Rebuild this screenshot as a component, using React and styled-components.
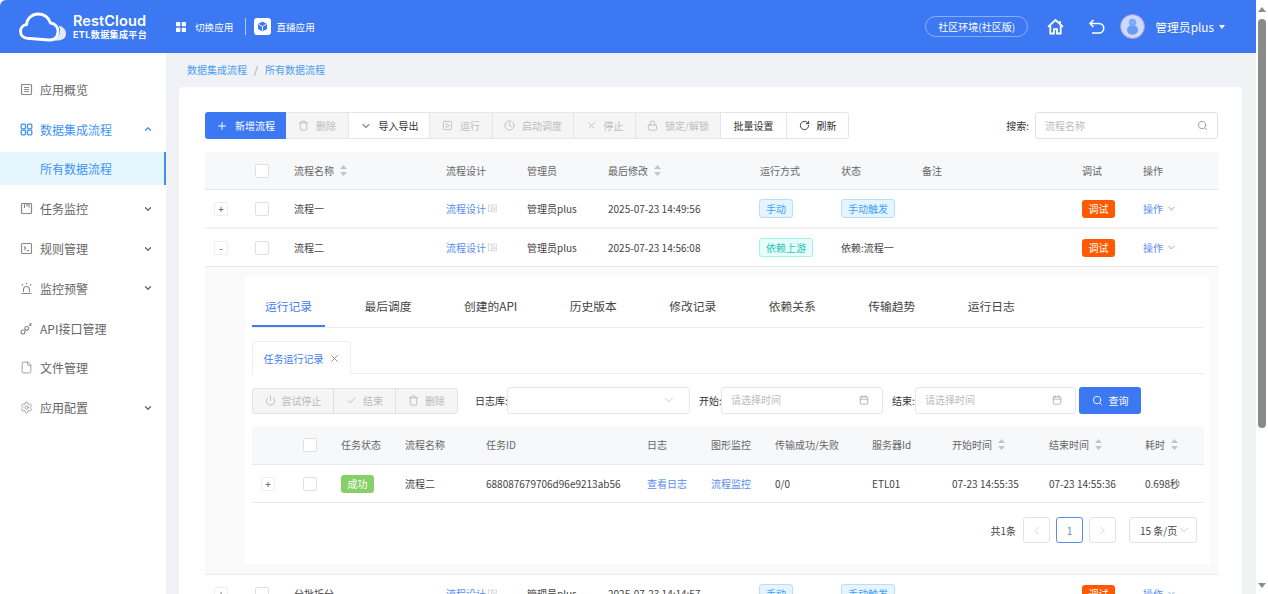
import styled, { createGlobalStyle } from "styled-components";
import {
    Plus,
    Trash,
    ChevronDown,
    ChevronUp,
    ChevronLeft,
    ChevronRight,
    SquarePlay,
    Clock,
    X,
    Lock,
    RotateCw,
    Search,
    Power,
    Check,
    Calendar,
    File,
    Settings,
} from "lucide-react";

const FLOW_COLUMNS = "50px 39px 152px 81px 81px 152px 81px 81px 160px 61px 75px";
const TASK_COLUMNS = "51px 38px 64px 81px 161px 64px 64px 97px 80px 97px 96px 59px";

const MENU = [
    { label: "应用概览", icon: <OverviewIcon /> },
    { label: "数据集成流程", icon: <GroupIcon />, open: true },
    { label: "任务监控", icon: <MonitorIcon />, arrow: true },
    { label: "规则管理", icon: <RuleIcon />, arrow: true },
    { label: "监控预警", icon: <AlarmIcon />, arrow: true },
    { label: "API接口管理", icon: <LinkIcon /> },
    { label: "文件管理", icon: <File size={13} strokeWidth={1.4} /> },
    { label: "应用配置", icon: <Settings size={13} strokeWidth={1.4} />, arrow: true },
];

const TOOLS = [
    { label: "删除", width: 63, icon: <Trash size={11} />, off: true },
    { label: "导入导出", width: 81, icon: <ChevronDown size={12} /> },
    { label: "运行", width: 63, icon: <SquarePlay size={11} />, off: true },
    { label: "启动调度", width: 81, icon: <Clock size={11} />, off: true },
    { label: "停止", width: 62, icon: <X size={11} />, off: true },
    { label: "锁定/解锁", width: 85, icon: <Lock size={11} />, off: true },
    { label: "批量设置", width: 66 },
    { label: "刷新", width: 62, icon: <RotateCw size={11} /> },
];

const TABS = ["运行记录", "最后调度", "创建的API", "历史版本", "修改记录", "依赖关系", "传输趋势", "运行日志"];

function OverviewIcon() {
    return (
        <svg width="13" height="13" viewBox="0 0 13 13" fill="none" stroke="currentColor" strokeWidth="1.2">
            <rect x="1.500" y="1.500" width="10" height="10" rx="1" />
            <path d="M4 4.500h5M4 6.500h5M4 8.500h5" />
        </svg>
    );
}

function GroupIcon() {
    return (
        <svg width="13" height="13" viewBox="0 0 13 13" fill="none" stroke="currentColor" strokeWidth="1.3">
            <rect x="1.200" y="1.200" width="4.300" height="4.600" rx="1" />
            <rect x="7.500" y="1.200" width="4.300" height="4.600" rx="1" />
            <rect x="1.200" y="7.200" width="4.300" height="4.600" rx="1" />
            <rect x="7.500" y="7.200" width="4.300" height="4.600" rx="1" />
        </svg>
    );
}

function MonitorIcon() {
    return (
        <svg width="13" height="13" viewBox="0 0 13 13" fill="none" stroke="currentColor" strokeWidth="1.2">
            <rect x="1.500" y="1.500" width="10" height="10" rx="1" />
            <path d="M4.500 2v4M7 2v2.500M9 2v3.500" />
        </svg>
    );
}

function RuleIcon() {
    return (
        <svg width="13" height="13" viewBox="0 0 13 13" fill="none" stroke="currentColor" strokeWidth="1.1">
            <rect x="1.500" y="1.500" width="10" height="10" rx="1" />
            <path d="M3.800 4.500l2 1.700-2 1.700M6.500 8.500h2.500" />
        </svg>
    );
}

function AlarmIcon() {
    return (
        <svg width="13" height="13" viewBox="0 0 13 13" fill="none" stroke="currentColor" strokeWidth="1.1">
            <path d="M3.500 10V7.500a3 3 0 0 1 6 0V10" />
            <path d="M1.500 11.500h10M6.500 .8v1.500M1.800 2.300l1.200 1.200M11.200 2.300L10 3.500" />
        </svg>
    );
}

function LinkIcon() {
    return (
        <svg width="13" height="13" viewBox="0 0 13 13" fill="none" stroke="currentColor" strokeWidth="1.1">
            <circle cx="3" cy="10" r="2" />
            <rect x="5" y="4.600" width="3.400" height="3.400" rx="1" transform="rotate(45 6.700 6.300)" />
            <path d="M9 4l2.500-2.500M9.500 1.500l2 2" />
        </svg>
    );
}

function Logo() {
    return (
        <svg width="48" height="30" viewBox="0 0 48 30" fill="none">
            <path
                d="M39.500 13.500C44 14.500 47 17.500 47 21.500 47 26.500 43 28.500 38 28.500L29 29C35 28.500 40 25.500 41 20 41.300 17.500 40.700 15.500 39.500 13.500z"
                fill="#fff"
                fillOpacity=".85"
            />
            <path
                d="M10 26.500C4.500 26.500 1.500 23.500 1.500 19.500 1.500 16 4 13 7.500 12.500 8 6.500 13 2 19 2c6 0 10.500 3.500 12.500 9 4.500.5 8 4 7.500 9-.5 5-4 8-8 8-7 0-14-1.500-21-1.500z"
                stroke="#fff"
                strokeWidth="2.800"
            />
        </svg>
    );
}

function AppsIcon() {
    return (
        <svg width="10" height="10" viewBox="0 0 10 10" fill="#fff">
            <rect width="4.300" height="4.300" rx=".8" />
            <rect x="5.700" width="4.300" height="4.300" rx=".8" />
            <rect y="5.700" width="4.300" height="4.300" rx=".8" />
            <rect x="5.700" y="5.700" width="4.300" height="4.300" rx=".8" />
        </svg>
    );
}

function BoxIcon() {
    return (
        <svg width="17" height="17" viewBox="0 0 17 17">
            <rect width="17" height="17" rx="3" fill="#fff" />
            <path d="M8.500 3.500l4.500 2.500v5l-4.500 2.500L4 11V6z" fill="#3b78f2" />
            <path d="M4.500 6.200l4 2.300 4-2.300M8.500 8.500v4.800" stroke="#fff" strokeWidth=".9" fill="none" />
        </svg>
    );
}

function HomeIcon() {
    return (
        <svg width="17" height="17" viewBox="0 0 17 17" fill="none" stroke="#fff" strokeWidth="1.800">
            <path d="M1 8.800L8.500 2 16 8.800" />
            <path d="M13 3v3" />
            <path d="M3.300 7.500v8h3.700v-4.300h3v4.300h3.700v-8" />
        </svg>
    );
}

function BackIcon() {
    return (
        <svg width="17" height="16" viewBox="0 0 17 16" fill="none" stroke="#fff" strokeWidth="1.600">
            <path d="M2 4.500h9a4.700 4.700 0 0 1 0 9.500H4" />
            <path d="M5.500 1L2 4.500 5.500 8" />
        </svg>
    );
}

function AvatarIcon() {
    return (
        <svg width="25" height="25" viewBox="0 0 25 25">
            <circle cx="12.500" cy="12.500" r="12" fill="#c9dcfb" stroke="#b58de0" strokeWidth="1" />
            <circle cx="12.500" cy="8.500" r="3.800" fill="#82a9f2" />
            <ellipse cx="12.500" cy="16" rx="5.500" ry="4.800" fill="#6a9bf4" />
        </svg>
    );
}

function SortIcon() {
    return (
        <svg width="7" height="11" viewBox="0 0 7 11" fill="#c4c4c4">
            <path d="M3.500 0L7 4H0z" />
            <path d="M3.500 11L0 7h7z" />
        </svg>
    );
}

function MiniDesign() {
    return (
        <svg width="9" height="9" viewBox="0 0 9 9" fill="none" stroke="#d8d8d8" strokeWidth=".9">
            <rect x=".5" y="1" width="3" height="6.500" />
            <rect x="5" y="1" width="3.500" height="3" />
            <rect x="5" y="5.300" width="3.500" height="2.500" />
        </svg>
    );
}

function FlowRow({ expander, name, time, way, wayColor, status, link }) {
    return (
        <FlowLine>
            <Cell>
                <Expander $left={9}>{expander}</Expander>
            </Cell>
            <Cell>
                <CheckBox />
            </Cell>
            <Cell>{name}</Cell>
            <LinkCell>
                流程设计
                <MiniDesign />
            </LinkCell>
            <Cell>管理员plus</Cell>
            <Cell>{time}</Cell>
            <Cell>
                <WayTag $color={wayColor}>{way}</WayTag>
            </Cell>
            <Cell>{link ? status : <Tag>{status}</Tag>}</Cell>
            <Cell />
            <Cell>
                <DebugButton>调试</DebugButton>
            </Cell>
            <OpCell>
                操作
                <ChevronDown size={11} strokeWidth={1.6} />
            </OpCell>
        </FlowLine>
    );
}

export default function App() {
    return (
        <Page>
            <GlobalStyle />
            <Main>
                <Header>
                    <Brand>
                        <Logo />
                        <BrandText>
                            <BrandName>RestCloud</BrandName>
                            <BrandSub>ETL数据集成平台</BrandSub>
                        </BrandText>
                    </Brand>
                    <HeaderLink>
                        <AppsIcon />
                        切换应用
                    </HeaderLink>
                    <HeaderDivider />
                    <HeaderLink $tight>
                        <BoxIcon />
                        直播应用
                    </HeaderLink>
                    <HeaderRight>
                        <EnvPill>社区环境(社区版)</EnvPill>
                        <HeaderIcon $width={41}>
                            <HomeIcon />
                        </HeaderIcon>
                        <HeaderIcon $width={32}>
                            <BackIcon />
                        </HeaderIcon>
                        <AvatarIcon />
                        <UserName>管理员plus</UserName>
                        <Caret />
                    </HeaderRight>
                </Header>
                <Body>
                    <Sidebar>
                        {MENU.map((item) => (
                            <div key={item.label}>
                                <MenuItem $open={item.open}>
                                    <MenuIcon $open={item.open}>{item.icon}</MenuIcon>
                                    {item.label}
                                    {item.open && <MenuArrow as={ChevronUp} size={10} strokeWidth={3} />}
                                    {item.arrow && <MenuArrow as={ChevronDown} size={10} strokeWidth={3} />}
                                </MenuItem>
                                {item.open && <SubItem>所有数据流程</SubItem>}
                            </div>
                        ))}
                    </Sidebar>
                    <Content>
                        <Crumbs>
                            数据集成流程<CrumbSlash>/</CrumbSlash>所有数据流程
                        </Crumbs>
                        <Card>
                            <TopBar>
                                <ButtonGroup>
                                    <PrimaryTool>
                                        <Plus size={12} />
                                        新增流程
                                    </PrimaryTool>
                                    {TOOLS.map((tool) => (
                                        <ToolButton key={tool.label} $width={tool.width} $off={tool.off}>
                                            {tool.icon}
                                            {tool.label}
                                        </ToolButton>
                                    ))}
                                </ButtonGroup>
                                <SearchLabel>搜索:</SearchLabel>
                                <SearchBox>
                                    流程名称
                                    <Search size={11} color="#999" />
                                </SearchBox>
                            </TopBar>

                            <FlowHead>
                                <Cell />
                                <Cell>
                                    <CheckBox />
                                </Cell>
                                <HeadCell>
                                    流程名称
                                    <SortIcon />
                                </HeadCell>
                                <Cell>流程设计</Cell>
                                <Cell>管理员</Cell>
                                <HeadCell>
                                    最后修改
                                    <SortIcon />
                                </HeadCell>
                                <Cell>运行方式</Cell>
                                <Cell>状态</Cell>
                                <Cell>备注</Cell>
                                <Cell>调试</Cell>
                                <Cell>操作</Cell>
                            </FlowHead>
                            <FlowRow expander="+" name="流程一" time="2025-07-23 14:49:56" way="手动" status="手动触发" />
                            <FlowRow
                                expander="-"
                                name="流程二"
                                time="2025-07-23 14:56:08"
                                way="依赖上游"
                                wayColor="teal"
                                status="依赖:流程一"
                                link
                            />

                            <Expanded>
                                <DetailPanel>
                                    <TabBar>
                                        {TABS.map((tab, i) => (
                                            <TabItem key={tab} $active={i === 0}>
                                                {tab}
                                            </TabItem>
                                        ))}
                                    </TabBar>
                                    <CardTabs>
                                        <CardTab>
                                            任务运行记录
                                            <X size={11} color="#888" />
                                        </CardTab>
                                    </CardTabs>
                                    <FilterBar>
                                        <OffGroup>
                                            <OffButton $width={81}>
                                                <Power size={11} />
                                                尝试停止
                                            </OffButton>
                                            <OffButton $width={62}>
                                                <Check size={11} />
                                                结束
                                            </OffButton>
                                            <OffButton $width={61}>
                                                <Trash size={11} />
                                                删除
                                            </OffButton>
                                        </OffGroup>
                                        <FilterLabel $gap={17} $width={32}>
                                            日志库:
                                        </FilterLabel>
                                        <FilterInput $width={183}>
                                            <span />
                                            <ChevronDown size={14} strokeWidth={1} color="#aaa" />
                                        </FilterInput>
                                        <FilterLabel $gap={9} $width={22}>
                                            开始:
                                        </FilterLabel>
                                        <FilterInput $width={162}>
                                            请选择时间
                                            <Calendar size={10} color="#aaa" />
                                        </FilterInput>
                                        <FilterLabel $gap={9} $width={23}>
                                            结束:
                                        </FilterLabel>
                                        <FilterInput $width={161}>
                                            请选择时间
                                            <Calendar size={10} color="#aaa" />
                                        </FilterInput>
                                        <QueryButton>
                                            <Search size={11} />
                                            查询
                                        </QueryButton>
                                    </FilterBar>
                                    <TaskHead>
                                        <Cell />
                                        <Cell>
                                            <CheckBox />
                                        </Cell>
                                        <Cell>任务状态</Cell>
                                        <Cell>流程名称</Cell>
                                        <Cell>任务ID</Cell>
                                        <Cell>日志</Cell>
                                        <Cell>图形监控</Cell>
                                        <Cell>传输成功/失败</Cell>
                                        <Cell>服务器Id</Cell>
                                        <HeadCell>
                                            开始时间
                                            <SortIcon />
                                        </HeadCell>
                                        <HeadCell>
                                            结束时间
                                            <SortIcon />
                                        </HeadCell>
                                        <HeadCell>
                                            耗时
                                            <SortIcon />
                                        </HeadCell>
                                    </TaskHead>
                                    <TaskLine>
                                        <Cell>
                                            <Expander $left={9}>+</Expander>
                                        </Cell>
                                        <Cell>
                                            <CheckBox />
                                        </Cell>
                                        <Cell>
                                            <SuccessTag>成功</SuccessTag>
                                        </Cell>
                                        <Cell>流程二</Cell>
                                        <Cell>688087679706d96e9213ab56</Cell>
                                        <LinkCell>查看日志</LinkCell>
                                        <LinkCell>流程监控</LinkCell>
                                        <Cell>0/0</Cell>
                                        <Cell>ETL01</Cell>
                                        <Cell>07-23 14:55:35</Cell>
                                        <Cell>07-23 14:55:36</Cell>
                                        <Cell>0.698秒</Cell>
                                    </TaskLine>
                                    <Pager>
                                        <PagerTotal>共1条</PagerTotal>
                                        <PageButton>
                                            <ChevronLeft size={13} strokeWidth={1.2} color="#bbb" />
                                        </PageButton>
                                        <PageButton $active>1</PageButton>
                                        <PageButton>
                                            <ChevronRight size={13} strokeWidth={1.2} color="#bbb" />
                                        </PageButton>
                                        <PageSize>
                                            15 条/页
                                            <ChevronDown size={14} strokeWidth={1} color="#aaa" />
                                        </PageSize>
                                    </Pager>
                                </DetailPanel>
                            </Expanded>

                            <FlowRow expander="+" name="分批拆分" time="2025-07-23 14:14:57" way="手动" status="手动触发" />
                        </Card>
                    </Content>
                </Body>
            </Main>
            <ScrollBar>
                <ArrowUp />
                <Thumb />
                <ArrowDown />
            </ScrollBar>
        </Page>
    );
}

const GlobalStyle = createGlobalStyle`
    html, body {
        margin: 0;
        height: 100%;
        overflow: hidden;
    }
    body {
        font-family: "Noto Sans CJK SC", "Noto Sans", sans-serif;
        font-size: 10px;
        color: #444;
    }
    * {
        box-sizing: border-box;
    }
`;

const Page = styled.div`
    width: 1268px;
    height: 594px;
    display: flex;
    overflow: hidden;
    background: #fff;
`;
const Main = styled.div`
    width: 1256px;
    display: flex;
    flex-direction: column;
`;
const Header = styled.div`
    height: 53px;
    flex: none;
    display: flex;
    align-items: center;
    padding: 0 31px 0 19px;
    background: #3b78f2;
    border-radius: 6px 0 0 0;
    color: #fff;
`;
const Brand = styled.div`
    width: 157px;
    display: flex;
    align-items: center;
    gap: 6px;
`;
const BrandText = styled.div`
    display: flex;
    flex-direction: column;
    padding-bottom: 2px;
    font-family: "Inter", "Noto Sans CJK SC", sans-serif;
    font-weight: 600;
`;
const BrandName = styled.div`
    font-size: 14.5px;
    line-height: 17px;
    letter-spacing: 0.1px;
`;
const BrandSub = styled.div`
    font-size: 9px;
    line-height: 11px;
    font-weight: 700;
    letter-spacing: 0.4px;
`;
const HeaderLink = styled.div`
    display: flex;
    align-items: center;
    gap: ${(p) => (p.$tight ? "5px" : "9px")};
    font-size: 9.6px;
`;
const HeaderDivider = styled.div`
    width: 1px;
    height: 17px;
    margin: 0 8px 0 12px;
    background: rgba(255, 255, 255, 0.6);
`;
const HeaderRight = styled.div`
    margin-left: auto;
    display: flex;
    align-items: center;
`;
const EnvPill = styled.div`
    width: 103px;
    height: 21px;
    display: flex;
    align-items: center;
    justify-content: center;
    margin-right: 19px;
    border: 1px solid rgba(255, 255, 255, 0.4);
    border-radius: 11px;
    font-size: 10px;
`;
const HeaderIcon = styled.div`
    width: ${(p) => p.$width}px;
    display: flex;
    align-items: center;
`;
const UserName = styled.div`
    margin-left: 10px;
    font-size: 11.8px;
`;
const Caret = styled.div`
    margin-left: 5px;
    border-left: 3.5px solid transparent;
    border-right: 3.5px solid transparent;
    border-top: 4px solid #fff;
`;
const Body = styled.div`
    flex: 1;
    min-height: 0;
    display: flex;
`;
const Sidebar = styled.div`
    width: 166px;
    flex: none;
    padding-top: 16.5px;
    background: #fff;
`;
const MenuItem = styled.div`
    height: 39.8px;
    display: flex;
    align-items: center;
    padding-left: 20px;
    font-size: 12px;
    color: ${(p) => (p.$open ? "#3d93f5" : "#666")};
`;
const MenuIcon = styled.span`
    width: 20px;
    display: flex;
    align-items: center;
    color: ${(p) => (p.$open ? "#3d93f5" : "#888")};
`;
const MenuArrow = styled.svg`
    margin-left: auto;
    margin-right: 13px;
`;
const SubItem = styled.div`
    height: 33px;
    margin: 3.200px 0 3.600px;
    display: flex;
    align-items: center;
    padding-left: 40px;
    font-size: 12px;
    color: #3d93f5;
    background: #e6f6ff;
    border-right: 2px solid #3d8ff0;
`;
const Content = styled.div`
    flex: 1;
    min-width: 0;
    display: flex;
    flex-direction: column;
    padding: 0 14px 0 13px;
    background: #f0f2f5;
`;
const Crumbs = styled.div`
    height: 34px;
    flex: none;
    display: flex;
    align-items: center;
    padding: 0 0 2px 8px;
    font-size: 10px;
    color: #4c9cf0;
`;
const CrumbSlash = styled.span`
    margin: 0 7px;
    color: #999;
`;
const Card = styled.div`
    flex: 1;
    padding: 25px 24px 0 26px;
    background: #fff;
    border-radius: 4px 4px 0 0;
    overflow: hidden;
`;
const TopBar = styled.div`
    height: 27px;
    margin-bottom: 13px;
    display: flex;
    align-items: center;
`;
const ButtonGroup = styled.div`
    display: flex;
    height: 27px;
`;
const ToolButton = styled.div`
    width: ${(p) => p.$width}px;
    display: flex;
    align-items: center;
    justify-content: center;
    gap: 7px;
    border: 1px solid #e6e6e6;
    border-left: 0;
    color: ${(p) => (p.$off ? "#bdbdbd" : "#333")};
    background: ${(p) => (p.$off ? "#f5f5f5" : "#fff")};
    &:last-child {
        border-radius: 0 3px 3px 0;
    }
`;
const PrimaryTool = styled.div`
    width: 81px;
    display: flex;
    align-items: center;
    justify-content: center;
    gap: 7px;
    color: #fff;
    background: #3b78f2;
    border-radius: 3px 0 0 3px;
`;
const SearchLabel = styled.div`
    margin-left: auto;
    margin-right: 6px;
    color: #333;
`;
const SearchBox = styled.div`
    width: 183px;
    height: 27px;
    display: flex;
    align-items: center;
    justify-content: space-between;
    padding: 0 9px;
    border: 1px solid #e2e2e2;
    border-radius: 3px;
    color: #bbb;
`;
const Cell = styled.div`
    display: flex;
    align-items: center;
    min-width: 0;
    white-space: nowrap;
`;
const HeadCell = styled(Cell)`
    gap: 6px;
`;
const LinkCell = styled(Cell)`
    gap: 2px;
    color: #5a8cf0;
`;
const OpCell = styled(LinkCell)`
    gap: 3px;
`;
const FlowHead = styled.div`
    display: grid;
    grid-template-columns: ${FLOW_COLUMNS};
    height: 38px;
    color: #666;
    background: #f7f8fa;
    border-bottom: 1px solid #e8e8e8;
    border-radius: 3px 3px 0 0;
`;
const FlowLine = styled.div`
    display: grid;
    grid-template-columns: ${FLOW_COLUMNS};
    height: 39px;
    border-bottom: 2px solid #f3f3f3;
    &:nth-of-type(4) {
        height: 38px;
        border-bottom: 1px solid #e8e8e8;
    }
`;
const Expander = styled.div`
    width: 14px;
    height: 14px;
    margin-left: ${(p) => p.$left}px;
    display: flex;
    align-items: center;
    justify-content: center;
    border: 1px solid #eee;
    border-radius: 2px;
    font-size: 10px;
    line-height: 1;
    color: #555;
    background: #fff;
`;
const CheckBox = styled.div`
    width: 14px;
    height: 14px;
    border: 1px solid #e0e0e0;
    border-radius: 2px;
    background: #fff;
`;
const Tag = styled.div`
    height: 19px;
    display: flex;
    align-items: center;
    padding: 0 6px;
    border-radius: 3px;
    border: 1px solid ${(p) => (p.$color === "teal" ? "#a8efe6" : "#b5deff")};
    color: ${(p) => (p.$color === "teal" ? "#27c4b5" : "#3ea0ff")};
    background: ${(p) => (p.$color === "teal" ? "#e6fffb" : "#e6f4ff")};
`;
const WayTag = styled(Tag)`
    margin-left: -1px;
`;
const DebugButton = styled.div`
    width: 33px;
    height: 18px;
    display: flex;
    align-items: center;
    justify-content: center;
    border-radius: 3px;
    color: #fff;
    background: #ff5a00;
`;
const Expanded = styled.div`
    height: 308px;
    padding: 10px 8px 10px 40px;
    background: #fafafa;
    border-bottom: 1px solid #eaeaea;
`;
const DetailPanel = styled.div`
    width: 965px;
    height: 287px;
    padding: 0 6px 0 7px;
    background: #fff;
`;
const TabBar = styled.div`
    height: 51px;
    display: flex;
    border-bottom: 1px solid #eee;
`;
const TabItem = styled.div`
    height: 50px;
    display: flex;
    align-items: center;
    padding: 8px 13px 0;
    margin-right: 26.500px;
    font-size: 11.750px;
    color: ${(p) => (p.$active ? "#3d7cf0" : "#444")};
    border-bottom: 2px solid ${(p) => (p.$active ? "#3d7cf0" : "transparent")};
`;
const CardTabs = styled.div`
    height: 33px;
    margin-top: 13px;
    display: flex;
    border-bottom: 1px solid #eee;
`;
const CardTab = styled.div`
    width: 99px;
    height: 33px;
    display: flex;
    align-items: center;
    justify-content: center;
    gap: 5px;
    color: #3d7cf0;
    background: #fff;
    border: 1px solid #eee;
    border-bottom: 0;
    border-radius: 3px 3px 0 0;
`;
const FilterBar = styled.div`
    height: 27px;
    margin-top: 13px;
    display: flex;
    align-items: center;
`;
const OffGroup = styled.div`
    display: flex;
    height: 26px;
    color: #bbb;
    background: #f5f5f5;
    border: 1px solid #e3e3e3;
    border-radius: 3px;
`;
const OffButton = styled.div`
    width: ${(p) => p.$width}px;
    display: flex;
    align-items: center;
    justify-content: center;
    gap: 6px;
    border-right: 1px solid #e0e0e0;
    &:last-child {
        border-right: 0;
    }
`;
const FilterLabel = styled.div`
    width: ${(p) => p.$width}px;
    flex: none;
    margin-left: ${(p) => p.$gap}px;
    white-space: nowrap;
    color: #333;
`;
const FilterInput = styled.div`
    width: ${(p) => p.$width}px;
    height: 27px;
    display: flex;
    align-items: center;
    justify-content: space-between;
    padding: 0 13px 2px 9px;
    border: 1px solid #e6e6e6;
    border-radius: 3px;
    color: #bbb;
`;
const QueryButton = styled.div`
    width: 62px;
    height: 27px;
    margin-left: 3px;
    display: flex;
    align-items: center;
    justify-content: center;
    gap: 6px;
    color: #fff;
    background: #3b78f2;
    border-radius: 3px;
`;
const TaskHead = styled.div`
    display: grid;
    grid-template-columns: ${TASK_COLUMNS};
    height: 39px;
    margin-top: 12px;
    padding-bottom: 1px;
    color: #666;
    background: #f7f8fa;
    border-bottom: 1px solid #e8e8e8;
`;
const TaskLine = styled.div`
    display: grid;
    grid-template-columns: ${TASK_COLUMNS};
    height: 38px;
    border-bottom: 1px solid #e8e8e8;
`;
const SuccessTag = styled.div`
    width: 33px;
    height: 18px;
    display: flex;
    align-items: center;
    justify-content: center;
    border-radius: 3px;
    color: #fff;
    background: #87d068;
`;
const Pager = styled.div`
    height: 26px;
    margin: 14px 7px 0 0;
    display: flex;
    align-items: center;
    justify-content: flex-end;
`;
const PagerTotal = styled.div`
    margin-right: 7px;
`;
const PageButton = styled.div`
    width: 27px;
    height: 26px;
    margin-right: 6px;
    display: flex;
    align-items: center;
    justify-content: center;
    border: 1px solid ${(p) => (p.$active ? "#5a8cf0" : "#e3e3e3")};
    border-radius: 3px;
    color: #5a8cf0;
`;
const PageSize = styled.div`
    width: 68px;
    height: 26px;
    margin-left: 7px;
    display: flex;
    align-items: center;
    padding-left: 10px;
    border: 1px solid #e3e3e3;
    border-radius: 3px;
`;
const ScrollBar = styled.div`
    width: 12px;
    flex: none;
    display: flex;
    flex-direction: column;
    align-items: center;
    padding: 7px 0 6px;
    background: #fff;
`;
const ArrowUp = styled.div`
    border-left: 4px solid transparent;
    border-right: 4px solid transparent;
    border-bottom: 5px solid #8c8c8c;
`;
const ArrowDown = styled.div`
    margin-top: auto;
    border-left: 4px solid transparent;
    border-right: 4px solid transparent;
    border-top: 5px solid #8c8c8c;
`;
const Thumb = styled.div`
    width: 8px;
    height: 409px;
    margin-top: 7px;
    border-radius: 4px;
    background: #8a8a8a;
`;
